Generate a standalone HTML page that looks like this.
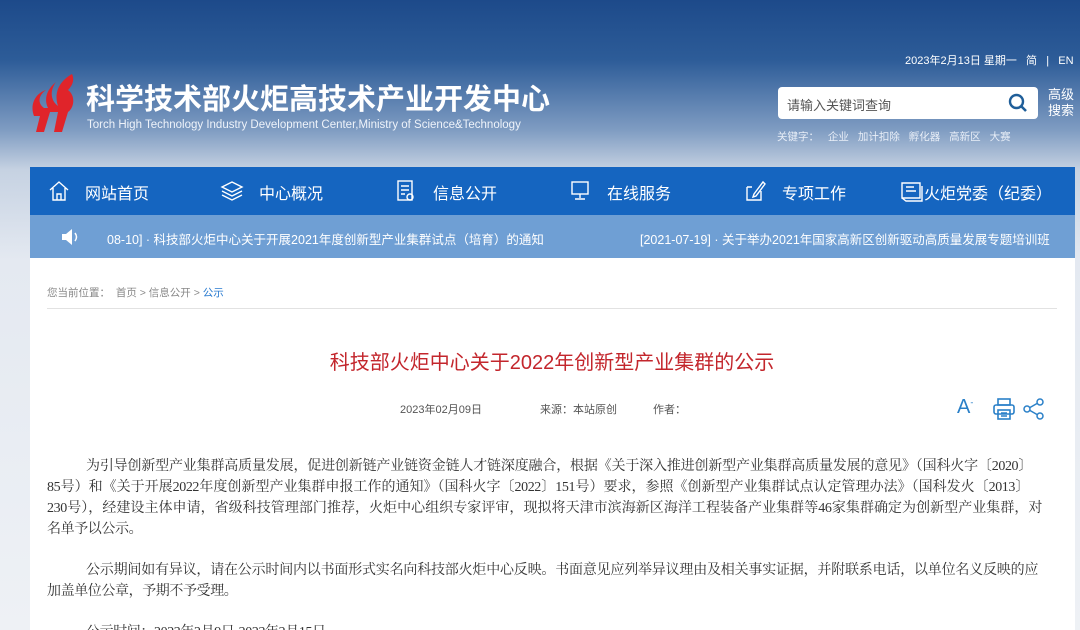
<!DOCTYPE html>
<html><head><meta charset="utf-8">
<style>
*{margin:0;padding:0;box-sizing:border-box}
html{width:1080px;height:630px;overflow:hidden;background:#eef1f5}
body{width:1080px;height:630px;overflow:hidden;font-family:"Liberation Sans","Noto Sans CJK SC",sans-serif;background:linear-gradient(180deg,#1d4a8a 0px,#2d5c98 60px,#7f9cc2 130px,#c6d2e2 170px,#e4e9f1 260px,#eef1f5 630px);position:relative}
.abs{position:absolute}
.logo-cn{left:86px;top:76px;color:#fff;font-size:29px;font-weight:bold;white-space:nowrap}
.logo-en{left:87px;top:119px;color:#eef3fa;font-size:11.5px;white-space:nowrap}
.date{left:905px;top:52px;color:#fff;font-size:11px;white-space:nowrap}
.search{left:778px;top:87px;width:260px;height:32px;background:#fff;border-radius:4px;}
.search span{position:absolute;left:9px;top:8px;font-size:13px;color:#555}
.adv{left:1048px;top:87px;color:#fff;font-size:13px;line-height:16px}
.kw{left:777px;top:129px;color:#e8eef7;font-size:10.5px;white-space:nowrap;word-spacing:6px}
.nav{left:30px;top:167px;width:1045px;height:48px;background:#1565c0}
.nav div{position:absolute;top:13px;color:#fff;font-size:16px;white-space:nowrap}
.tick{left:30px;top:215px;width:1045px;height:43px;background:#6f9fd4}
.tick div{position:absolute;top:14px;color:#fff;font-size:12.5px;white-space:nowrap}
.main{left:30px;top:258px;width:1045px;height:372px;background:#fff}
.crumb{left:47px;top:285px;font-size:10.5px;color:#888;white-space:nowrap}
.hr{left:47px;top:308px;width:1010px;height:1px;background:#e2e2e2}
.title{left:0;width:1104px;text-align:center;top:346px;color:#c3262c;font-size:20px}
.meta{top:401px;font-size:11px;color:#555;white-space:nowrap}
.ln{position:absolute;font-family:"Liberation Serif","Noto Serif CJK SC",serif;font-size:14px;line-height:20px;height:20px;color:#333;white-space:nowrap;text-align:justify;text-align-last:justify;letter-spacing:-0.4px;overflow:hidden}
</style></head><body>
<svg class="abs" style="left:28px;top:72px" width="50" height="62" viewBox="0 0 50 62">
<path d="M44 2 C30 10 26 22 30 34 C22 28 22 18 28 10 C18 18 16 28 20 36 L16 36 C8 30 12 22 18 18 C6 22 2 34 6 44 L12 44 L8 60 L16 60 L22 40 L30 40 L26 60 L34 60 L40 40 C46 36 48 24 40 18 C46 12 46 6 44 2Z" fill="#e0242a"/>
</svg>
<div class="abs logo-cn">科学技术部火炬高技术产业开发中心</div>
<div class="abs logo-en">Torch High Technology Industry Development Center,Ministry of Science&amp;Technology</div>
<div class="abs date">2023年2月13日 星期一 &nbsp; 简 &nbsp; | &nbsp; EN</div>
<div class="abs search"><span>请输入关键词查询</span>
<svg style="position:absolute;right:10px;top:6px" width="20" height="20" viewBox="0 0 20 20"><circle cx="8.5" cy="8.5" r="6.5" fill="none" stroke="#1f5e99" stroke-width="2.4"/><path d="M13 13 L18 18" stroke="#1f5e99" stroke-width="2.6"/></svg></div>
<div class="abs adv">高级<br>搜索</div>
<div class="abs kw">关键字： 企业 加计扣除 孵化器 高新区 大赛</div>
<div class="abs nav">
<svg style="position:absolute;left:18px;top:13px" width="22" height="22" viewBox="0 0 22 22" fill="none" stroke="#fff" stroke-width="1.4"><path d="M2 10 L11 2 L20 10 M5 8 V20 H17 V8 M9 20 V14 H13 V20"/></svg>
<div style="left:55px">网站首页</div>
<svg style="position:absolute;left:190px;top:13px" width="24" height="22" viewBox="0 0 24 22" fill="none" stroke="#fff" stroke-width="1.4"><path d="M12 2 L22 7 L12 12 L2 7Z M2 11 L12 16 L22 11 M2 15 L12 20 L22 15"/></svg>
<div style="left:229px">中心概况</div>
<svg style="position:absolute;left:366px;top:13px" width="20" height="22" viewBox="0 0 20 22" fill="none" stroke="#fff" stroke-width="1.4"><rect x="2" y="1" width="14" height="19"/><path d="M5 6 H13 M5 10 H13 M5 14 H9"/><circle cx="14" cy="17" r="3"/></svg>
<div style="left:403px">信息公开</div>
<svg style="position:absolute;left:539px;top:13px" width="22" height="22" viewBox="0 0 22 22" fill="none" stroke="#fff" stroke-width="1.4"><rect x="3" y="2" width="16" height="12"/><path d="M11 14 V18 M6 19 H16"/></svg>
<div style="left:577px">在线服务</div>
<svg style="position:absolute;left:714px;top:12px" width="22" height="24" viewBox="0 0 22 24" fill="none" stroke="#fff" stroke-width="1.4"><path d="M3 8 H8 M3 8 V21 H17 V12 M10 15 L19 3 L21 5 L12 17 L9 18Z"/></svg>
<div style="left:752px">专项工作</div>
<svg style="position:absolute;left:870px;top:13px" width="24" height="22" viewBox="0 0 24 22" fill="none" stroke="#fff" stroke-width="1.4"><path d="M2 3 H20 V18 H2Z M6 7 H14 M6 11 H16 M2 18 L6 21 H22 V6"/></svg>
<div style="left:894px">火炬党委（纪委）</div>
</div>
<div class="abs tick">
<svg style="position:absolute;left:30px;top:12px" width="22" height="20" viewBox="0 0 22 20"><path d="M2 7 H6 L12 2 V18 L6 13 H2Z" fill="#fff"/><path d="M15 6 Q18 10 15 14" stroke="#fff" stroke-width="1.5" fill="none"/></svg>
<div style="left:77px">08-10] · 科技部火炬中心关于开展2021年度创新型产业集群试点（培育）的通知</div>
<div style="left:610px">[2021-07-19] · 关于举办2021年国家高新区创新驱动高质量发展专题培训班</div>
</div>
<div class="abs main"></div>
<div class="abs crumb">您当前位置： &nbsp;首页 &gt; 信息公开 &gt; <span style="color:#2a7bd0">公示</span></div>
<div class="abs hr"></div>
<div class="abs title">科技部火炬中心关于2022年创新型产业集群的公示</div>
<div class="abs meta" style="left:400px">2023年02月09日</div>
<div class="abs meta" style="left:540px">来源：本站原创</div>
<div class="abs meta" style="left:653px">作者：</div>
<div class="abs" style="left:957px;top:396px;color:#2a80c8;font-size:20px">A<sup style="font-size:9px">-</sup></div>
<svg class="abs" style="left:992px;top:398px" width="24" height="22" viewBox="0 0 24 22" fill="none" stroke="#2a80c8" stroke-width="1.6"><rect x="6" y="1" width="12" height="6"/><rect x="2" y="7" width="20" height="9" rx="2"/><rect x="6" y="12" width="12" height="9"/><path d="M9 15 H15 M9 18 H15"/></svg>
<svg class="abs" style="left:1022px;top:397px" width="24" height="24" viewBox="0 0 24 24" fill="none" stroke="#2a80c8" stroke-width="1.5"><circle cx="18" cy="5" r="3"/><circle cx="5" cy="12" r="3"/><circle cx="18" cy="19" r="3"/><path d="M8 10.5 L15 6.5 M8 13.5 L15 17.5"/></svg>
<div class="ln" style="left:86px;width:946px;top:457px">为引导创新型产业集群高质量发展，促进创新链产业链资金链人才链深度融合，根据《关于深入推进创新型产业集群高质量发展的意见》（国科火字〔2020〕</div>
<div class="ln" style="left:47px;width:982px;top:478px">85号）和《关于开展2022年度创新型产业集群申报工作的通知》（国科火字〔2022〕151号）要求，参照《创新型产业集群试点认定管理办法》（国科发火〔2013〕</div>
<div class="ln" style="left:47px;width:995px;top:499px">230号），经建设主体申请，省级科技管理部门推荐，火炬中心组织专家评审，现拟将天津市滨海新区海洋工程装备产业集群等46家集群确定为创新型产业集群，对</div>
<div class="ln" style="left:47px;top:520px;text-align-last:auto">名单予以公示。</div>
<div class="ln" style="left:86px;width:952px;top:561px">公示期间如有异议，请在公示时间内以书面形式实名向科技部火炬中心反映。书面意见应列举异议理由及相关事实证据，并附联系电话，以单位名义反映的应</div>
<div class="ln" style="left:47px;top:582px;text-align-last:auto">加盖单位公章，予期不予受理。</div>
<div class="ln" style="left:86px;top:623px;text-align-last:auto">公示时间：2023年2月9日-2023年2月15日</div>
</body></html>
